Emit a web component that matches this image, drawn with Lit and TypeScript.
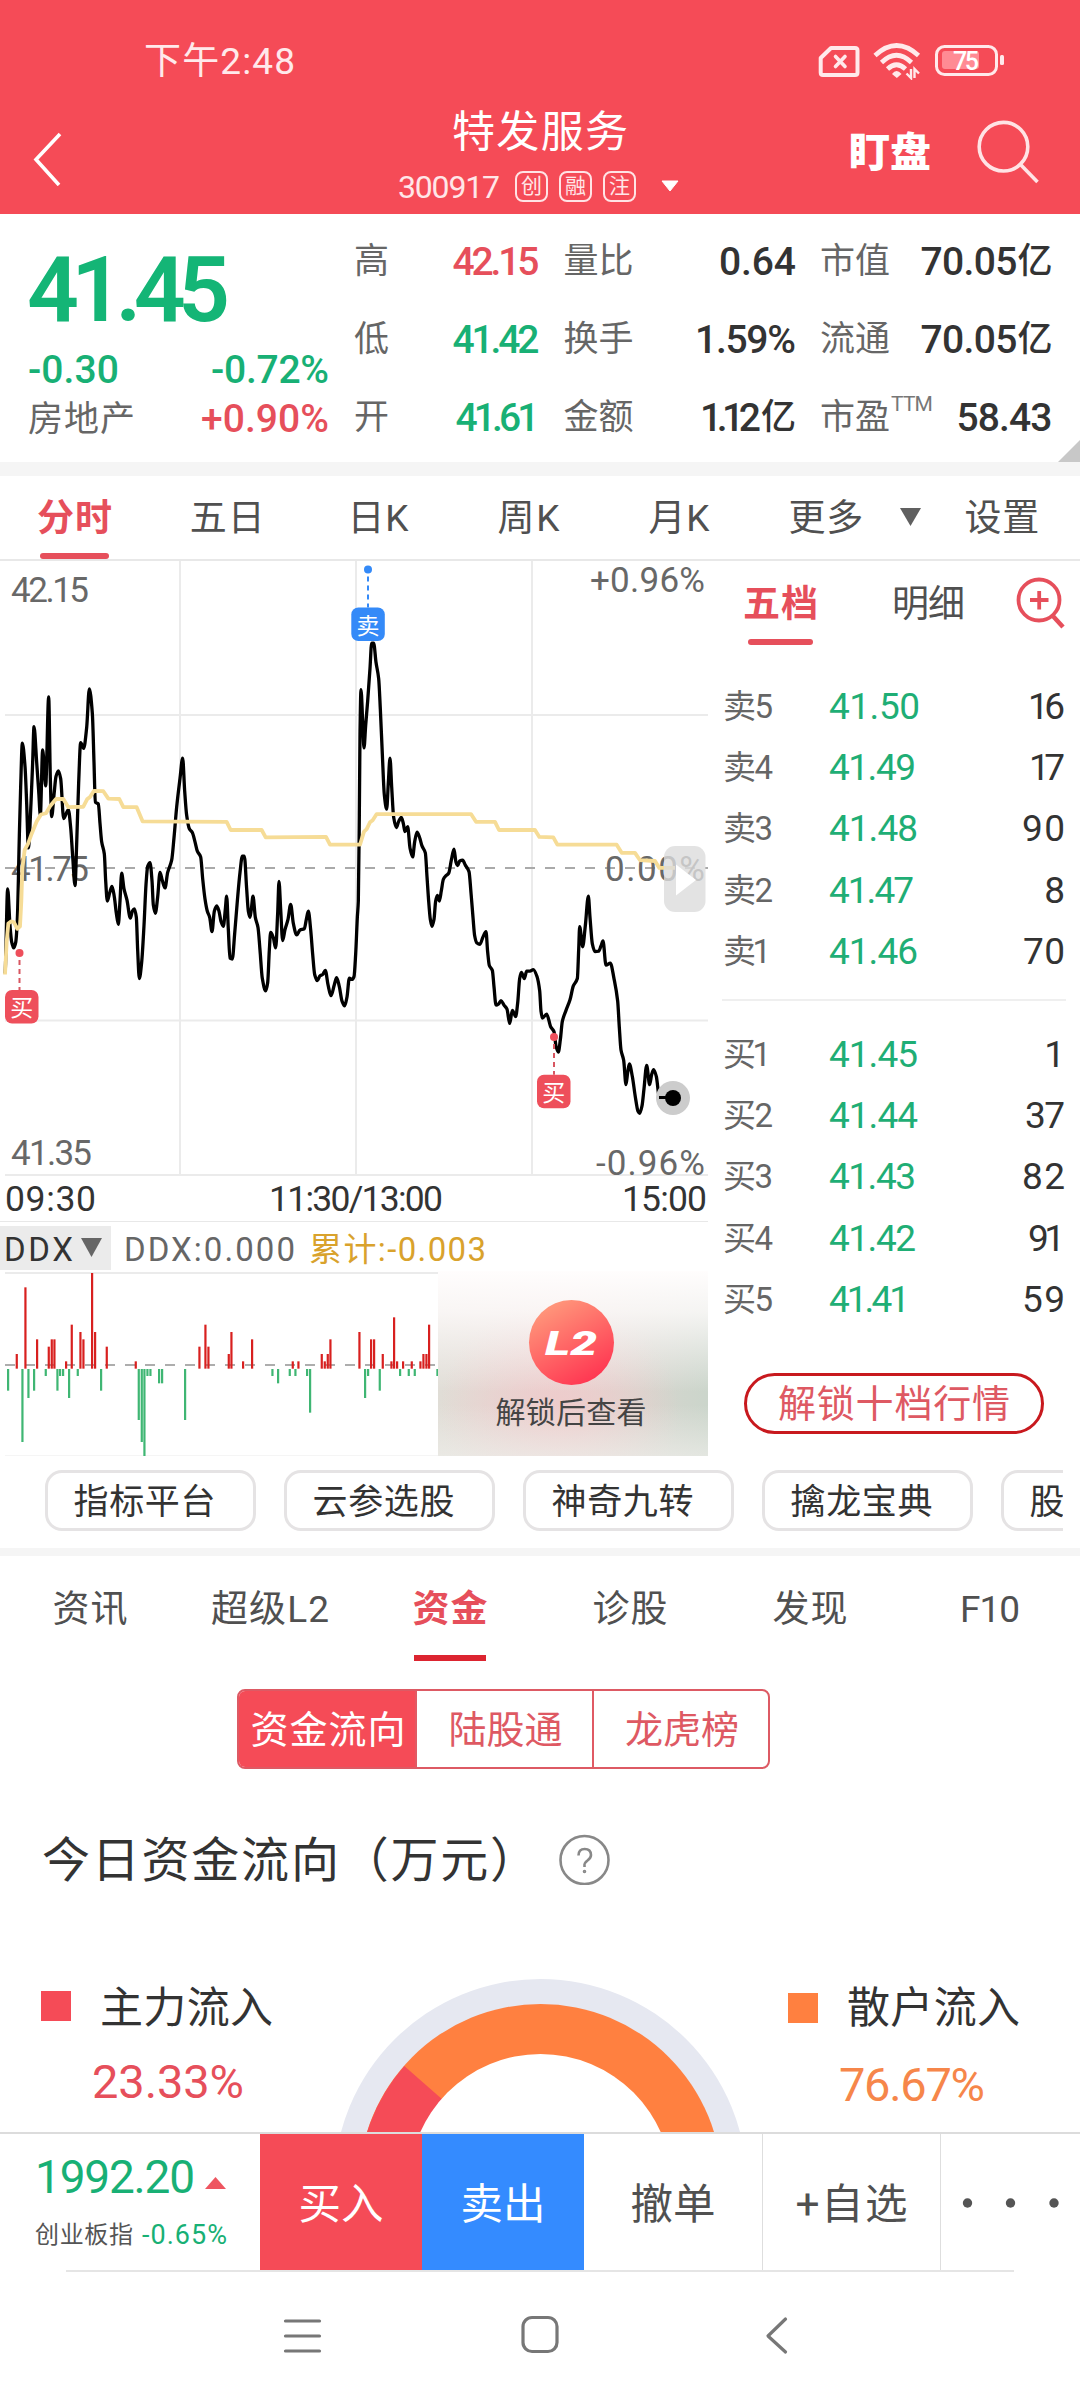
import { LitElement, html, svg, css } from "lit";
import { customElement, property } from "lit/decorators.js";

/** Text set to a given advance width by spreading its letter spacing. */
@customElement("fit-text")
class FitText extends LitElement {
  static styles = css`
    :host {
      display: inline-block;
      white-space: nowrap;
    }
    .run {
      display: inline-block;
      transform: translateY(1.5px);
    }
  `;
  @property() text = "";
  @property({ type: Number }) w = 0;

  render() {
    return html`<span class="run">${this.text}</span>`;
  }

  updated() {
    const run = this.renderRoot.querySelector(".run") as HTMLElement;
    run.style.letterSpacing = "0";
    const gaps = [...this.text].length - 1;
    if (!this.w || gaps < 1) return;
    const spacing = (this.w - run.getBoundingClientRect().width) / gaps;
    run.style.letterSpacing = `${spacing}px`;
    run.style.marginRight = `${-spacing}px`;
  }
}

const fit = (text: string, w: number, cls = "") =>
  html`<fit-text class=${cls} text=${text} w=${w}></fit-text>`;

const morning =
  "15,1035 23,830 30,920 35,960 41,975 47,962 52,905 58,700 62,580 67,473 75,530 80,620 85,730 93,620 98,520 102,433 110,520 116,590 121,650 128,490 137,578 146,360 151,560 155,653 162,600 168,555 175,541 182,560 191,658 205,636 212,680 218,750 225,822 230,720 236,570 242,472 251,486 260,435 268,340 277,400 282,520 286,618 295,622 300,670 305,715 313,745 317,810 322,860 329,840 336,824 343,850 349,890 355,917 360,860 365,792 372,830 381,858 391,902 397,885 403,879 409,900 413,980 418,1050 425,1010 432,920 438,820 443,775 450,766 456,810 460,870 466,890 473,850 480,790 487,810 495,828 503,790 515,760 522,705 530,630 540,560 548,510 554,590 560,650 568,683 577,692 585,715 592,738 602,752 608,805 615,855 622,885 629,900 636,935 643,885 650,872 657,885 663,910 670,922 676,880 680,848 685,930 690,1000 697,1002 704,940 712,860 720,790 727,750 733,750 740,830 745,885 750,900 754,880 759,848 766,900 774,925 780,980 787,1050 797,1080 803,1060 808,980 812,937 820,950 827,975 833,890 837,812 842,880 848,957 855,930 864,905 872,868 880,915 890,943 900,931 913,928 919,905 925,885 932,930 938,990 944,1040 952,1055 960,1043 968,1040 976,1030 984,1065 993,1092 1003,1065 1010,1048 1018,1070 1026,1105 1034,1117 1041,1095 1048,1049";
const afternoon =
  "6,1052 12,1045 17,990 22,900 25,860 28,650 30,450 33,342 38,420 42,485 47,430 53,370 60,290 65,228 71,228 78,275 86,315 91,390 97,500 103,600 110,635 115,570 120,510 125,580 131,655 139,680 146,665 154,655 160,670 165,690 173,678 180,730 188,752 194,715 201,691 209,705 216,725 226,742 231,800 236,860 241,905 246,922 252,905 257,860 262,846 268,860 274,835 280,807 288,798 296,792 304,760 312,733 318,765 323,773 329,762 338,760 346,772 357,788 363,840 369,900 374,945 380,962 390,966 398,950 408,935 413,985 418,1018 427,1030 432,1070 438,1115 446,1112 453,1104 462,1115 471,1125 479,1160 487,1128 497,1143 503,1110 509,1050 514,1035 523,1050 530,1032 540,1032 550,1028 561,1045 569,1080 573,1130 577,1147 590,1137 602,1168 612,1180 618,1215 625,1230 631,1200 637,1155 648,1128 660,1102 670,1068 682,1050 686,980 689,923 698,972 706,920 715,848 720,900 727,965 735,984 746,983 753,970 759,958 768,1017 781,1012 792,1050 803,1105 808,1170 813,1225 821,1250 828,1310 833,1280 838,1259 847,1290 856,1340 864,1375 869,1380 876,1362 882,1320 890,1263 899,1310 905,1285 911,1273 919,1290 928,1340 968,1342";
const averageMorning =
  "15,1040 20,960 25,915 33,910 42,912 52,928 60,922 64,860 67,780 74,735 84,720 95,695 110,665 123,648 138,645 150,628 168,610 190,610 205,630 250,629 262,610 270,605 282,590 310,591 325,609 358,610 370,630 410,630 428,665 680,666 692,686 785,686 797,704 978,703 990,722";
const averageAfternoon =
  "30,722 42,690 50,684 60,667 68,662 80,647 363,647 378,666 435,666 447,686 555,686 568,703 610,704 622,722 800,722 815,742 855,742 870,760 915,762 928,779 975,779";

const parse = (s: string, dx: number): [number, number][] =>
  s.split(" ").map((p) => {
    const [x, y] = p.split(",").map(Number);
    return [(x + dx) / 3, 550 + y / 2.45];
  });

/** Smooth path through the points, with flat tangents at turning points. */
function smooth(pts: [number, number][]): string {
  const n = pts.length;
  const slope = (i: number) => (pts[i + 1][1] - pts[i][1]) / (pts[i + 1][0] - pts[i][0]);
  const m = pts.map((_, i) => {
    if (i === 0 || i === n - 1) return 0;
    const a = slope(i - 1);
    const b = slope(i);
    return a * b <= 0 ? 0 : (2 * a * b) / (a + b);
  });
  let d = `M${pts[0][0]} ${pts[0][1]}`;
  for (let i = 0; i < n - 1; i++) {
    const [x0, y0] = pts[i];
    const [x1, y1] = pts[i + 1];
    const h = (x1 - x0) / 3;
    d += `C${x0 + h} ${y0 + m[i] * h} ${x1 - h} ${y1 - m[i + 1] * h} ${x1} ${y1}`;
  }
  return d;
}

const pricePath = smooth([...parse(morning, 0), ...parse(afternoon, 1050)]);
const averagePath =
  "M" + [...parse(averageMorning, 0), ...parse(averageAfternoon, 1050)].map((p) => p.join(" ")).join("L");

const redBars = [
  [50, 294], [76, 94], [111, 250], [146, 272], [155, 250], [163, 250], [198, 316], [215, 206], [241, 228], [250, 250],
  [276, 51], [285, 228], [320, 272], [407, 316], [598, 272], [616, 206], [625, 272], [686, 294], [694, 228], [729, 316],
  [756, 250], [878, 316], [895, 316], [965, 294], [974, 316], [983, 294], [991, 250], [1078, 228], [1113, 250],
  [1122, 250], [1148, 294], [1174, 316], [1182, 184], [1191, 316], [1209, 316], [1235, 316], [1261, 316], [1270, 294],
  [1279, 294], [1287, 206],
];
const greenBars = [
  [24, 404], [67, 558], [85, 426], [102, 404], [137, 360], [172, 404], [180, 360], [189, 360], [207, 426], [233, 360],
  [303, 404], [416, 492], [425, 558], [433, 602], [442, 360], [451, 360], [477, 382], [486, 382], [555, 492],
  [817, 360], [834, 382], [869, 360], [886, 360], [921, 360], [930, 470], [1095, 426], [1104, 360], [1139, 404],
  [1200, 360], [1226, 360], [1244, 360], [1312, 360],
];

const asks = [["卖5", "41.50", 88, "16", 34], ["卖4", "41.49", 84, "17", 33], ["卖3", "41.48", 86, "90", 40], ["卖2", "41.47", 82, "8", 0], ["卖1", "41.46", 86, "70", 39]] as const;
const bids = [["买1", "41.45", 86, "1", 0], ["买2", "41.44", 86, "37", 37], ["买3", "41.43", 84, "82", 40], ["买4", "41.42", 84, "91", 34], ["买5", "41.41", 78, "59", 40]] as const;

const marker = (x: number, dotY: number, boxX: number, boxY: number, kind: string, label: string) => svg`
  <circle class=${kind} cx=${x} cy=${dotY} r="4"></circle>
  <line class="lead ${kind}" x1=${x} y1=${dotY + 7} x2=${x} y2=${boxY}></line>
  <rect class=${kind} x=${boxX} y=${boxY} width="33.5" height="33.5" rx="7"></rect>
  <text class="marker-text" x=${boxX + 16.7} y=${boxY + 26}>${label}</text>`;

@customElement("app-root")
class AppRoot extends LitElement {
  static styles = css`
    :host {
      display: block;
      width: 1080px;
      height: 2400px;
      overflow: hidden;
      background: #fff;
      color: #333;
      font-family: Roboto, "Noto Sans CJK SC", sans-serif;
      font-size: 37px;
    }
    * { box-sizing: border-box; }
    svg { display: block; flex: none; }
    .page { display: flex; flex-direction: column; width: 1080px; height: 2400px; }
    .red { color: #e64f5b; }
    .green { color: #18b075; }

    .header { height: 214px; background: #f54b57; color: #fff; flex: none; }
    .status { height: 120px; padding: 0 76px 0 144px; display: flex; align-items: center; line-height: 44px; color: #ffe9eb; font-size: 37px; }
    .status-icons { margin-left: auto; }
    .battery-text { font: 500 25px Roboto, sans-serif; fill: #fff; }
    .bar { display: grid; grid-template-columns: 390px 300px 390px; margin-top: -24px; height: 118px; }
    .back { padding: 36px 0 0 33px; }
    .title-box { display: flex; flex-direction: column; align-items: center; }
    .title { font-size: 43px; line-height: 48px; margin-top: 10px; }
    .sub { display: flex; align-items: center; height: 32px; margin: 16px 0 0; color: #ffe6e8; width: 288px; }
    .code { font-size: 32px; line-height: 32px; margin: -3px 15px 0 2px; }
    .badge { width: 33px; height: 31px; border: 2px solid #ffe3e5; border-radius: 8px; font-size: 21px; line-height: 27px; text-align: center; margin-right: 11px; flex: none; }
    .sub svg { margin-left: 14px; }
    .tools { display: flex; padding: 22px 0 0 159px; }
    .watch { font-size: 41px; font-weight: 900; line-height: 66px; }
    .tools svg { margin-left: 44px; }

    .quote { position: relative; flex: none; height: 248px; padding: 7px 0 0 28px; display: flex; line-height: 40px; }
    .last { width: 301px; }
    .price { display: block; margin: 12px 0 0 -1px; font-size: 91px; line-height: 111px; font-weight: 600; height: 111px; color: #14b576; }
    .pair { display: flex; justify-content: space-between; height: 49px; line-height: 49px; }
    .fig { font-size: 39px; font-weight: 500; }
    .lab { font-size: 35px; color: #666; }
    .stats { margin-left: 25px; display: grid; grid-template-columns: 185.5px 232.5px 232.5px; grid-template-rows: repeat(3, 78px); column-gap: 24px; }
    .stat { display: flex; justify-content: space-between; align-items: center; }
    .yi { font-size: 35px; font-weight: 500; transform: translateY(1.5px); }
    .stat-value { display: flex; align-items: center; }
    .sup { font-size: 21px; color: #777; line-height: 24px; margin-top: -24px; margin-right: auto; padding-left: 1px; letter-spacing: -0.8px; }
    .fold { position: absolute; right: 0; bottom: 0; }
    .band { background: #f5f5f5; height: 14px; flex: none; }
    .band.thin { height: 8px; }

    .periods { flex: none; display: flex; height: 85px; border-bottom: 2px solid #e8e8e8; color: #505050; font-size: 37px; line-height: 82px; }
    .period { width: 150.6px; display: flex; flex-direction: column; align-items: center; height: 83px; }
    .period.on { color: #e64f5b; font-weight: 700; width: 149px; margin-right: 3px; }
    .period.wide { width: 143px; }
    .period.on::after { content: ""; width: 69px; height: 7px; border-radius: 3px; background: #e64f5b; margin-top: -5px; }
    .periods svg { margin: 32px 43px 0 3px; }

    .trade { flex: none; display: grid; grid-template-columns: 708px 372px; height: 895px; }
    .left { overflow: hidden; }
    .grid { stroke: #ebebeb; stroke-width: 2; fill: none; }
    .mid { stroke: #aaa; stroke-width: 2; stroke-dasharray: 10 5; }
    .line { stroke: #000; stroke-width: 3.3; fill: none; stroke-linejoin: round; stroke-linecap: round; }
    .average { stroke: #f6dc96; stroke-width: 3.8; fill: none; stroke-linejoin: round; }
    .mid.axis-line { stroke-dasharray: 10 10; }
    .axis { font: 35px Roboto, sans-serif; fill: #686868; }
    .buy { fill: #ee4f5b; stroke: none; }
    .sell { fill: #348af8; stroke: none; }
    .lead { stroke-width: 2; stroke-dasharray: 5 4; }
    .lead.buy { stroke: #d85661; }
    .lead.sell { stroke: #348af8; }
    .marker-text { font: 23px "Noto Sans CJK SC", sans-serif; fill: #fff; text-anchor: middle; }
    .times { display: grid; grid-template-columns: 1fr 1fr 1fr; height: 46px; padding: 0 1px 0 5px; font-size: 35.5px; line-height: 43px; border-bottom: 1px solid #e8e8e8; }
    .times > :nth-child(2) { text-align: center; }
    .times > :nth-child(3) { text-align: right; }
    .ddx { display: flex; height: 49px; align-items: center; font-size: 33px; line-height: 44px; padding-top: 2px; color: #666; }
    .pick { display: flex; align-items: center; gap: 8px; background: #ebebeb; color: #333; width: 111px; height: 44px; padding-left: 4px; }
    .ddx-value { margin-left: 13px; }
    .ddx-total { margin-left: 14px; color: #d9a22c; }
    .sub-chart { display: flex; height: 186px; }
    .rb { fill: #d8201f; }
    .gb { fill: #3fb673; }
    .zero { stroke: #adadad; stroke-width: 2; stroke-dasharray: 10 10; }
    .locked { width: 270px; height: 186px; display: flex; flex-direction: column; align-items: center; padding: 29px 4px 0 0; color: #444; font-size: 30px;
      background:
        linear-gradient(180deg, #fffdfd 0%, rgba(255, 252, 252, 0.8) 22%, rgba(255, 255, 255, 0) 65%),
        linear-gradient(180deg, rgba(238, 238, 234, 0) 72%, rgba(238, 238, 234, 0.7) 100%),
        radial-gradient(ellipse 120px 110px at 45% 75%, rgba(238, 203, 203, 1), rgba(238, 203, 203, 0)),
        linear-gradient(90deg, #e0ddd6 0%, #e6d6d3 45%, #cbd5cb 100%); }
    .disc { width: 85px; height: 85px; border-radius: 50%; background: linear-gradient(150deg, #ff9c7d 8%, #ff3350 90%); }
    .l2 { font: italic 900 34px Roboto, sans-serif; fill: #fff; }
    .locked fit-text { line-height: 40px; margin-top: 6px; }

    .book { padding: 0 14px 0 14px; display: flex; flex-direction: column; }
    .book-tabs { display: flex; height: 113px; color: #505050; font-size: 37px; line-height: 84px; }
    .book-tab { margin-left: 21px; height: 88px; display: flex; flex-direction: column; align-items: center; }
    .book-tab.on { color: #e64f5b; font-weight: 700; }
    .book-tab.on::after { content: ""; width: 65px; height: 6px; border-radius: 3px; background: #e64f5b; margin-top: -6px; }
    .book-tab.second { margin-left: 74px; }
    .book-tabs svg { margin: 12px 0 0 51px; }
    .level { display: grid; grid-template-columns: 106px 1fr auto; height: 61.4px; align-items: center; line-height: 60px; padding: 0 1px; }
    .level .side { font-size: 33px; color: #666; }
    .level .at { font-size: 37px; color: #1fae75; font-weight: 450; }
    .level .qty { font-size: 37px; }
    .rule { height: 2px; background: #efefef; margin: 18px 0 21px; flex: none; }
    .unlock { width: 300px; height: 61px; margin: 44px 0 0 22px; border: 3px solid #c8191e; border-radius: 31px; color: #de5963; text-align: center; line-height: 53px; font-size: 38px; }

    .chips { flex: none; display: flex; gap: 28px; margin: 14px 17px 17px 0; padding-left: 45px; overflow: hidden; height: 61px; }
    .chip { flex: none; width: 211px; border: 3px solid #e5e3e4; border-radius: 17px; padding-left: 25.5px; font-size: 35px; line-height: 55px; }

    .sections { flex: none; display: grid; grid-template-columns: repeat(6, 180px); height: 133px; color: #505050; font-size: 37px; line-height: 104px; }
    .section { display: flex; flex-direction: column; align-items: center; }
    .section.on { color: #e64f5b; font-weight: 700; }
    .section.on::after { content: ""; width: 72px; height: 6px; background: #dc2430; margin-top: -5px; }
    .segments { flex: none; width: 533px; height: 80px; margin-left: 237px; display: grid; grid-template-columns: 176px 177px 1fr; border: 2.5px solid #dd5a64; border-radius: 8px; overflow: hidden; font-size: 38px; line-height: 75px; text-align: center; color: #de5963; }
    .segment { padding-left: 2px; }
    .segment + .segment { border-left: 2px solid #e05a64; }
    .segment.on { background: #f54b57; color: #fff; }
    .flow-title { flex: none; display: flex; height: 90px; margin: 45px 0 0 42px; font-size: 48px; line-height: 90px; align-items: center; }
    .flow-title svg { margin-left: 21px; }
    .flow { flex: none; display: grid; grid-template-columns: 341px 399px 340px; margin-top: 75px; height: 153px; }
    .legend { display: grid; grid-template-columns: 30px auto; grid-template-rows: 54px 60px; column-gap: 29px; justify-content: start; align-content: start; padding-left: 41px; line-height: 54px; font-size: 43px; }
    .swatch { width: 30px; height: 30px; background: #f54b57; margin-top: 12px; }
    .legend.retail { padding-left: 48px; }
    .retail .swatch { background: #ff8040; margin-top: 14px; }
    .share { grid-column: 1 / 3; margin: 20px 0 0 51px; font-size: 47px; }
    .retail .share { margin-top: 23px; color: #f6864a; }

    .actions { flex: none; display: grid; grid-template-columns: 260px 162px 162px 179px 178px 139px; height: 138px; border-top: 2px solid #dcdcdc; font-size: 42.5px; line-height: 137px; color: #505050; text-align: center; }
    .index { text-align: left; padding: 14px 0 0 35px; line-height: 54px; }
    .index-row { display: flex; align-items: center; height: 54px; font-size: 46px; }
    .index-row svg { margin: 16px 0 0 10px; }
    .index-row.small { font-size: 24px; color: #555; margin-top: 4px; }
    .pct { font-size: 27px; margin-left: 9px; }
    .action.buy-btn { background: #f54b57; color: #fff; }
    .action.sell-btn { background: #348bff; color: #fff; }
    .action { border-right: 1.5px solid #dedede; }
    .action.buy-btn, .action.sell-btn, .action.more { border-right: 0; }
    .action.more { padding: 64px 0 0 21px; }
    .nav { flex: none; width: 948px; margin-left: 66px; border-top: 2px solid #e5e5e5; display: flex; padding: 43px 0 0 215px; }
    .nav svg { overflow: visible; }
    .nav svg + svg { margin-left: 196px; }
    .nav-line { stroke: #777; stroke-width: 3.2; fill: none; stroke-linecap: round; stroke-linejoin: round; }
  `;

  private stat(label: string, lw: number, value: string, vw: number, cls = "", unit = "") {
    return html`<div class="stat">
      ${fit(label, lw, "lab")}${label === "市盈" ? html`<span class="sup">TTM</span>` : ""}
      <span class="stat-value">${fit(value, vw, "fig " + cls)}${unit ? html`<span class="yi">${unit}</span>` : ""}</span>
    </div>`;
  }

  private level([side, price, pw, qty, qw]: readonly [string, string, number, string, number]) {
    return html`<div class="level">
      ${fit(side, side.endsWith("1") ? 48 : 50, "side")}${fit(price, pw + 3, "at")}${fit(qty, qw ? qw + 3 : 0, "qty")}
    </div>`;
  }

  private header() {
    return html`<div class="header">
      <div class="status">
        ${fit("下午2:48", 151)}
        <svg class="status-icons" width="188" height="40" viewBox="816 40 188 40" fill="none" stroke="#ffe9eb">
          <path d="M831 48H855Q857.500 48 857.500 50.500V72.500Q857.500 75 855 75H823Q820.700 75 820.700 72.500V58Z" stroke-width="4" stroke-linejoin="round"></path>
          <path d="M835.500 56.500L845 66.500M845 56.500L835.500 66.500" stroke-width="3.600" stroke-linecap="round"></path>
          <path d="M875 55.500Q896.500 35.500 918.500 55.500M881.500 62.500Q896.500 48 911.500 62.500M887.500 69Q896.500 60.500 905.500 69" stroke-width="4.600"></path>
          <path d="M892 74Q896.500 68 901.500 74L896.800 78Z" fill="#ffe9eb" stroke="none"></path>
          <path d="M911 69V78L906.500 73.500M914.500 78V69L919 73.500" stroke-width="2.400"></path>
          <rect x="936.500" y="46.500" width="60" height="28" rx="8" stroke-width="3"></rect>
          <rect x="942" y="51" width="37" height="18" rx="3" fill="#ff8b94" stroke="none"></rect>
          <rect x="1000" y="55" width="4" height="10" rx="1.500" fill="#ffe9eb" stroke="none"></rect>
          <text class="battery-text" x="953" y="69.500" textLength="26" stroke="none">75</text>
        </svg>
      </div>
      <div class="bar">
        <div class="back">
          <svg width="30" height="54" viewBox="33 132 30 54" fill="none" stroke="#fff" stroke-width="3.600"><path d="M60 134L36 159.500L59 185"></path></svg>
        </div>
        <div class="title-box">
          <div class="title">${fit("特发服务", 176)}</div>
          <div class="sub">
            ${fit("300917", 102, "code")}
            <span class="badge">创</span><span class="badge">融</span><span class="badge">注</span>
            <svg width="18" height="12"><path d="M1 1H17L9 11Z" fill="#fff" stroke="#fff" stroke-linejoin="round"></path></svg>
          </div>
        </div>
        <div class="tools">
          ${fit("盯盘", 82, "watch")}
          <svg width="66" height="66" viewBox="975 118 66 66" fill="none" stroke="#ffe3e5" stroke-width="3.600"><circle cx="1003.500" cy="146.700" r="24.300"></circle><path d="M1020 164L1037.500 182"></path></svg>
        </div>
      </div>
    </div>`;
  }

  private quote() {
    return html`<div class="quote">
      <div class="last">
        <div class="price">${fit("41.45", 203)}</div>
        <div class="pair green">${fit("-0.30", 91, "fig")}${fit("-0.72%", 118, "fig")}</div>
        <div class="pair">${fit("房地产", 107, "lab")}${fit("+0.90%", 128, "fig red")}</div>
      </div>
      <div class="stats">
        ${this.stat("高", 0, "42.15", 87, "red")} ${this.stat("量比", 70, "0.64", 77)} ${this.stat("市值", 70, "70.05", 97, "", "亿")}
        ${this.stat("低", 0, "41.42", 87, "green")} ${this.stat("换手", 70, "1.59%", 101)} ${this.stat("流通", 70, "70.05", 97, "", "亿")}
        ${this.stat("开", 0, "41.61", 84, "green")} ${this.stat("金额", 70, "1.12", 61, "", "亿")} ${this.stat("市盈", 70, "58.43", 96)}
      </div>
      <svg class="fold" width="22" height="22"><path d="M22 0V22H0Z" fill="#c8c8c8"></path></svg>
    </div>`;
  }

  private chart() {
    return html`<svg width="708" height="615" viewBox="0 561 708 615">
      <path class="grid" d="M180 561V1175M356 561V1175M532 561V1175M5 715H708M5 1020.500H708M5 1175H708"></path>
      <line class="mid axis-line" x1="5" y1="868" x2="708" y2="868"></line>
      <text class="axis" x="11" y="602" textLength="78">42.15</text>
      <text class="axis" x="11" y="881" textLength="78">41.75</text>
      <text class="axis" x="11" y="1165" textLength="81">41.35</text>
      <text class="axis" x="590" y="592" textLength="115">+0.96%</text>
      <text class="axis" x="605" y="881" textLength="100">0.00%</text>
      <text class="axis" x="596" y="1174.500" textLength="109">-0.96%</text>
      <path class="line" d=${pricePath}></path>
      <path class="average" d=${averagePath}></path>
      <circle cx="673" cy="1098" r="17" fill="#ccc"></circle>
      <path d="M659 1097.500H673" stroke="#000" stroke-width="3"></path>
      <circle cx="673" cy="1098" r="8" fill="#000"></circle>
      ${marker(368, 569.6, 351.3, 607.5, "sell", "卖")}
      ${marker(19.5, 953, 5, 990, "buy", "买")}
      ${marker(554, 1037, 537, 1074.8, "buy", "买")}
      <rect x="664" y="846" width="41.500" height="66" rx="11" fill="#dcdcdc" fill-opacity=".8"></rect>
      <path d="M676 864.500V895.500L696 880Z" fill="#fff"></path>
    </svg>`;
  }

  private left() {
    return html`<div class="left">
      ${this.chart()}
      <div class="times">${fit("09:30", 91)}${fit("11:30/13:00", 174)}${fit("15:00", 85)}</div>
      <div class="ddx">
        <span class="pick">${fit("DDX", 69)}<svg width="21" height="19"><path d="M0 0H21L10.500 19Z" fill="#666"></path></svg></span>
        ${fit("DDX:0.000", 171, "ddx-value")}${fit("累计:-0.003", 177, "ddx-total")}
      </div>
      <div class="sub-chart">
        <svg width="438" height="186" viewBox="0 1270 438 186">
          <path class="grid" d="M5 1272H438M5 1455.500H438"></path>
          <line class="zero" x1="5" y1="1364" x2="438" y2="1364"></line>
          ${redBars.map(([x, y]) => svg`<rect class="rb" x=${x / 3 - 1} y=${1255 + y / 3} width="2.2" height=${(338 - y) / 3}></rect>`)}
          ${greenBars.map(([x, y]) => svg`<rect class="gb" x=${x / 3 - 1} y="1368" width="2.2" height=${(y - 339) / 3}></rect>`)}
        </svg>
        <div class="locked">
          <div class="disc"><svg width="85" height="85"><text class="l2" x="16" y="55" textLength="52" lengthAdjust="spacingAndGlyphs">L2</text></svg></div>
          ${fit("解锁后查看", 151)}
        </div>
      </div>
    </div>`;
  }

  private book() {
    return html`<div class="book">
      <div class="book-tabs">
        <div class="book-tab on">${fit("五档", 75)}</div>
        <div class="book-tab second">${fit("明细", 73)}</div>
        <svg width="52" height="56" viewBox="1016 573 52 56" fill="none" stroke="#e64f5b" stroke-width="3.800"><circle cx="1039" cy="600" r="20.500"></circle><path d="M1030 600H1048.500M1039.200 591V609.500"></path><path d="M1052 615L1063 627" stroke-width="4.500"></path></svg>
      </div>
      ${asks.map((l) => this.level(l))}
      <div class="rule"></div>
      ${bids.map((l) => this.level(l))}
      <div class="unlock">${fit("解锁十档行情", 232)}</div>
    </div>`;
  }

  render() {
    return html`<div class="page">
      ${this.header()} ${this.quote()}
      <div class="band"></div>
      <div class="periods">
        <div class="period on">${fit("分时", 75)}</div>
        <div class="period">${fit("五日", 75)}</div>
        <div class="period">${fit("日K", 61)}</div>
        <div class="period">${fit("周K", 62)}</div>
        <div class="period">${fit("月K", 61)}</div>
        <div class="period wide">${fit("更多", 75)}</div>
        <svg width="21" height="18"><path d="M0 0H21L10.500 18Z" fill="#606060"></path></svg>
        ${fit("设置", 75)}
      </div>
      <div class="trade">${this.left()} ${this.book()}</div>
      <div class="chips">
        ${["指标平台", "云参选股", "神奇九转", "擒龙宝典"].map((c) => html`<div class="chip">${fit(c, 142)}</div>`)}
        <div class="chip">${fit("股", 0)}</div>
      </div>
      <div class="band thin"></div>
      <div class="sections">
        <div class="section">${fit("资讯", 75)}</div>
        <div class="section">${fit("超级L2", 118)}</div>
        <div class="section on">${fit("资金", 75)}</div>
        <div class="section">${fit("诊股", 75)}</div>
        <div class="section">${fit("发现", 75)}</div>
        <div class="section">${fit("F10", 60)}</div>
      </div>
      <div class="segments">
        <div class="segment on">${fit("资金流向", 155)}</div>
        <div class="segment">${fit("陆股通", 114)}</div>
        <div class="segment">${fit("龙虎榜", 114)}</div>
      </div>
      <div class="flow-title">
        ${fit("今日资金流向（万元）", 496)}
        <svg width="52" height="52" viewBox="0 0 52 52" fill="none" stroke="#888" stroke-width="2.600">
          <circle cx="25.500" cy="27" r="24"></circle>
          <path d="M19.500 22.500Q19.500 16 25.700 16T32 22Q32 25 28.500 27.500T25.500 33V34"></path>
          <circle cx="25.500" cy="38.500" r="1" stroke-width="1.600"></circle>
        </svg>
      </div>
      <div class="flow">
        <div class="legend">
          <span class="swatch"></span>${fit("主力流入", 173)}${fit("23.33%", 152, "share red")}
        </div>
        <svg width="399" height="153" viewBox="341 1979 399 153">
          <circle cx="540.500" cy="2185.600" r="206.600" fill="#e6e8f1"></circle>
          <circle cx="540.500" cy="2185.600" r="181.600" fill="#ff8040"></circle>
          <path d="M540.500 2185.600L404.300 2066A181.600 181.600 0 0 0 358.900 2185.600Z" fill="#f54b57"></path>
          <circle cx="540.500" cy="2185.600" r="131.600" fill="#fff"></circle>
        </svg>
        <div class="legend retail">
          <span class="swatch"></span>${fit("散户流入", 173)}${fit("76.67%", 146, "share")}
        </div>
      </div>
      <div class="actions">
        <div class="index">
          <div class="index-row green">${fit("1992.20", 160)}<svg width="21" height="12"><path d="M10.500 0L21 12H0Z" fill="#ee5560"></path></svg></div>
          <div class="index-row small">${fit("创业板指", 98)}${fit("-0.65%", 85, "pct green")}</div>
        </div>
        <div class="action buy-btn">${fit("买入", 85)}</div>
        <div class="action sell-btn">${fit("卖出", 85)}</div>
        <div class="action">${fit("撤单", 85)}</div>
        <div class="action">${fit("+自选", 112)}</div>
        <div class="action more">
          <svg width="100" height="10" fill="#555"><circle cx="5.500" cy="5" r="4.700"></circle><circle cx="48.500" cy="5" r="4.700"></circle><circle cx="92" cy="5" r="4.700"></circle></svg>
        </div>
      </div>
      <div class="nav">
        <svg width="40" height="40"><path class="nav-line" d="M4.500 6H38.500M4.500 21H38.500M4.500 36H38.500"></path></svg>
        <svg width="40" height="40"><rect class="nav-line" x="6" y="2.500" width="34" height="34" rx="9"></rect></svg>
        <svg width="40" height="40"><path class="nav-line" d="M32.500 4L15 21L32.500 37"></path></svg>
      </div>
    </div>`;
  }
}
